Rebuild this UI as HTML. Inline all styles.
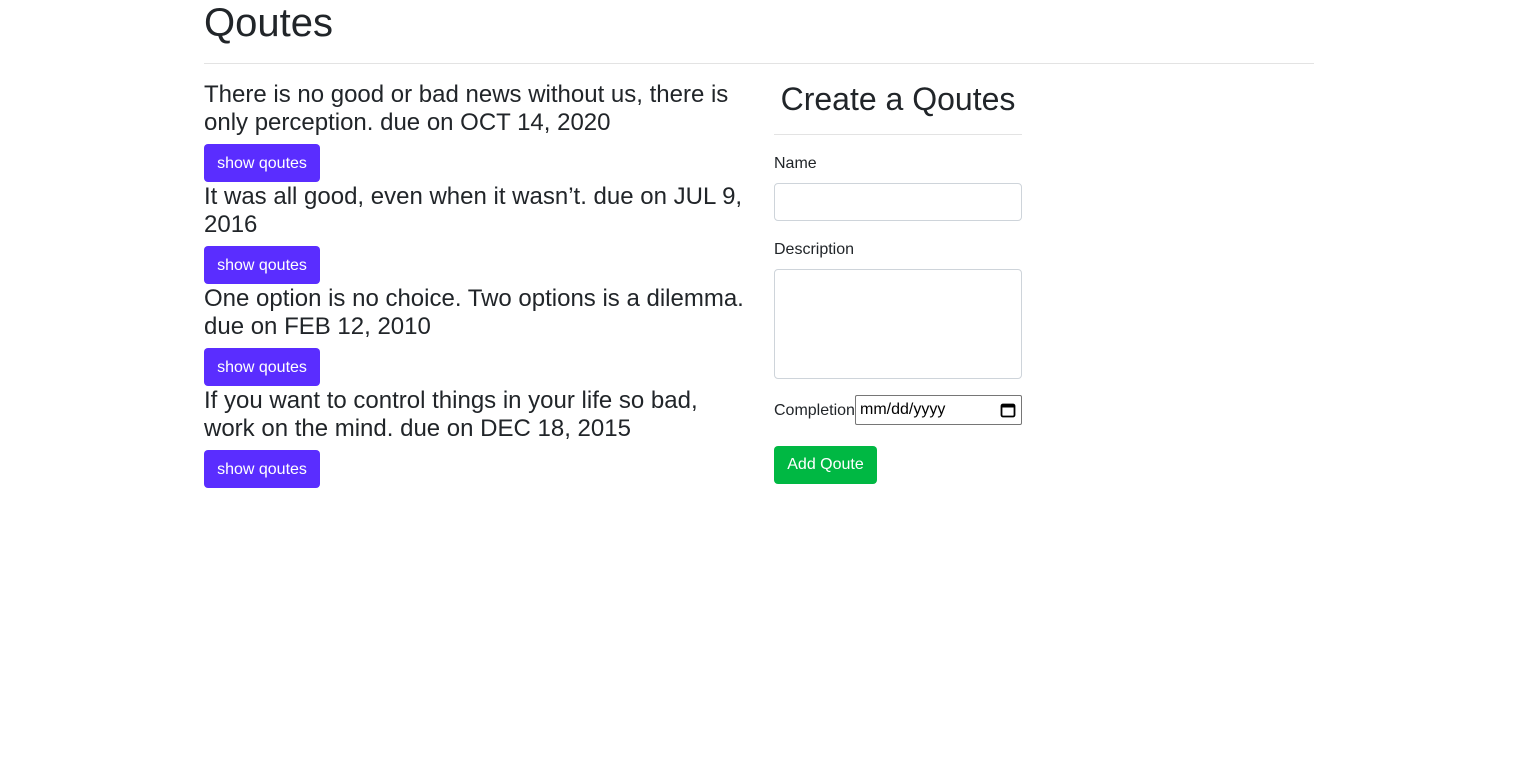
<!DOCTYPE html>
<html><head><style>
body{margin:0;font-family:"Liberation Sans",sans-serif;color:#212529;background:#fff}
.a{position:absolute}
h1{position:absolute;left:204px;top:1px;margin:0;font-size:40px;font-weight:400;line-height:44px}
.hr{position:absolute;left:204px;width:1110px;top:63px;height:1px;background:#e3e3e3}
.q{position:absolute;left:204px;width:550px;font-size:24px;line-height:28px}
.btn{position:absolute;left:204px;width:116px;height:38px;background:#5a2dff;color:#fff;border-radius:4px;font-size:16px;line-height:40px;text-align:center}
.lbl{position:absolute;left:774px;font-size:16px}
.inp{position:absolute;left:774px;width:246px;border:1px solid #ced4da;border-radius:4px;background:#fff}
</style></head><body>
<h1>Qoutes</h1>
<div class="hr"></div>
<div class="q" style="top:81px">There is no good or bad news without us, there is only perception. due on OCT 14, 2020</div>
<div class="btn" style="top:144px">show qoutes</div>
<div class="q" style="top:183px">It was all good, even when it wasn’t. due on JUL 9, 2016</div>
<div class="btn" style="top:246px">show qoutes</div>
<div class="q" style="top:285px">One option is no choice. Two options is a dilemma. due on FEB 12, 2010</div>
<div class="btn" style="top:348px">show qoutes</div>
<div class="q" style="top:387px">If you want to control things in your life so bad, work on the mind. due on DEC 18, 2015</div>
<div class="btn" style="top:450px">show qoutes</div>
<div class="a" style="left:774px;width:248px;top:80px;text-align:center;font-size:32px;line-height:38px">Create a Qoutes</div>
<div class="a" style="left:774px;width:248px;top:134px;height:1px;background:#e3e3e3"></div>
<div class="lbl" style="top:155px">Name</div>
<div class="inp" style="top:183px;height:36px"></div>
<div class="lbl" style="top:241px">Description</div>
<div class="inp" style="top:269px;height:108px"></div>
<div class="lbl" style="top:402px">Completion</div>
<div class="a" style="left:855px;top:395px;width:165px;height:28px;border:1px solid #767676;border-radius:2px;font-size:16px;line-height:28px;color:#000"><span style="margin-left:4px">mm/dd/yyyy</span>
<svg class="a" style="right:5px;top:6px" width="16" height="16" viewBox="0 0 16 16"><rect x="1.5" y="2.5" width="13" height="12" rx="1.5" fill="none" stroke="#000" stroke-width="1.8"/><rect x="1.5" y="2.5" width="13" height="3" fill="#000"/></svg></div>
<div class="a" style="left:774px;top:446px;width:103px;height:38px;background:#00b843;color:#fff;border-radius:4px;font-size:16px;line-height:38px;text-align:center">Add Qoute</div>
</body></html>
